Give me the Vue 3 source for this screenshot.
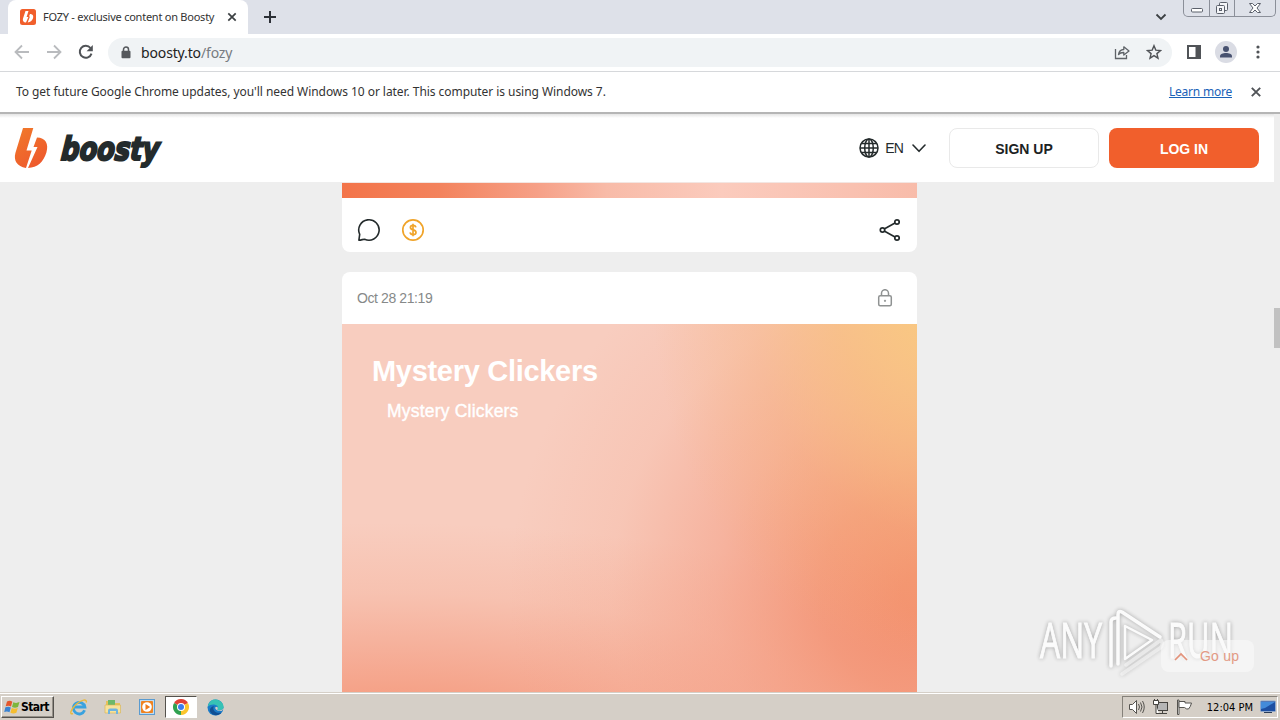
<template>
  <div class="screen">
    <div class="tabstrip">
      <div class="tab">
        <svg class="favicon" width="16" height="16" viewBox="0 0 16 16">
          <rect width="16" height="16" rx="2.5" fill="#f15f2c" />
          <path d="M5.500 2h3L6.600 8h1.800L6 13.600C3.300 13.300 2.400 11.600 3 9.500zM10 5c2.900.1 3.800 2 2.900 4.600-.8 2.200-2.600 3.700-5.200 3.900L10 7.500H9z" fill="#fff" />
        </svg>
        <span class="tab-title">FOZY - exclusive content on Boosty</span>
        <svg width="10" height="10" viewBox="0 0 10 10"><path d="M1.300 1.300l7.400 7.400M8.700 1.300L1.300 8.700" stroke="#3c4043" stroke-width="1.700" /></svg>
      </div>
      <svg class="new-tab" width="14" height="14" viewBox="0 0 14 14"><path d="M7 1v12M1 7h12" stroke="#2d3037" stroke-width="2" /></svg>
      <svg class="tab-search" width="12" height="8" viewBox="0 0 12 8"><path d="M1.500 1.500L6 6l4.500-4.500" fill="none" stroke="#3c4043" stroke-width="1.800" /></svg>
      <div class="window-buttons">
        <span class="win-btn min"><svg width="14" height="6"><rect x="1.500" y="1.500" width="11" height="3.500" rx="1" fill="#fff" stroke="#5b606b" /></svg></span>
        <span class="win-btn max"><svg width="14" height="14" fill="#f4f5f8" stroke="#5b606b"><rect x="4.500" y="1.500" width="8" height="8" rx="1" /><rect x="1.500" y="4.500" width="8" height="8" rx="1" /><rect x="4.500" y="7.500" width="2" height="2" /></svg></span>
        <span class="win-btn close"><svg width="14" height="12" viewBox="0 0 14 12"><path d="M1.500 1.500h3L7 4l2.500-2.500h3L9 6l3.500 4.500h-3L7 8l-2.500 2.500h-3L5 6z" fill="#fff" stroke="#5b606b" /></svg></span>
      </div>
    </div>

    <div class="toolbar">
      <svg class="nav" width="16" height="16" viewBox="0 0 16 16" fill="none" stroke="#b9bbbe" stroke-width="1.800"><path d="M15 8H2M8 1.500L1.500 8 8 14.500" /></svg>
      <svg class="nav" width="16" height="16" viewBox="0 0 16 16" fill="none" stroke="#b9bbbe" stroke-width="1.800"><path d="M1 8h13M8 1.500L14.500 8 8 14.500" /></svg>
      <svg class="nav" width="16" height="16" viewBox="0 0 16 16"><path d="M13.500 9.600A6 6 0 1 1 12.500 4" fill="none" stroke="#505357" stroke-width="2" /><path d="M14.800 1v6.200H8.600z" fill="#505357" /></svg>
      <div class="omnibox">
        <svg width="10" height="13" viewBox="0 0 10 13"><path d="M2.500 6V3.500a2.500 2.500 0 0 1 5 0V6" fill="none" stroke="#55585c" stroke-width="1.500" /><rect x=".5" y="4.800" width="9" height="7.500" rx="1" fill="#55585c" /></svg>
        <span class="url">boosty.to<span class="path">/fozy</span></span>
        <svg class="share-page" width="16" height="16" viewBox="0 0 16 16" fill="none" stroke="#5f6368" stroke-width="1.300"><path d="M1.500 5v9.500h11V11" /><path d="M4.500 10.500C5 7.200 7 5.600 9.800 5.500V2.800L15 7l-5.200 4V8.500c-2.300-.1-4 .5-5.300 2z" stroke-linejoin="round" /></svg>
        <svg width="16" height="16" viewBox="0 0 16 16"><path d="M8 1.700l1.800 4.400 4.700.4-3.600 3.100 1.100 4.600L8 11.700l-4 2.500 1.100-4.600-3.600-3.100 4.700-.4z" fill="none" stroke="#505357" stroke-width="1.400" /></svg>
      </div>
      <svg class="side-panel" width="14" height="14" viewBox="0 0 14 14"><rect x="1" y="1" width="12" height="12" fill="none" stroke="#505357" stroke-width="2" /><path d="M8.500 1H14v12H8.500z" fill="#505357" /></svg>
      <svg class="avatar" width="22" height="22" viewBox="0 0 22 22"><circle cx="11" cy="11" r="11" fill="#dadce4" /><circle cx="11" cy="8" r="3" fill="#47516f" /><path d="M5 16.500v-1.300c0-2 3-3.200 6-3.200s6 1.200 6 3.200v1.300z" fill="#47516f" /></svg>
      <svg width="4" height="14" viewBox="0 0 4 14" fill="#505357"><circle cx="2" cy="2" r="1.600" /><circle cx="2" cy="7" r="1.600" /><circle cx="2" cy="12" r="1.600" /></svg>
    </div>

    <div class="infobar">
      <span class="info-text">To get future Google Chrome updates, you'll need Windows 10 or later. This computer is using Windows 7.</span>
      <a class="learn">Learn more</a>
      <svg width="10" height="10" viewBox="0 0 10 10"><path d="M.8.8l8.400 8.400M9.200.8L.8 9.200" stroke="#505357" stroke-width="1.900" /></svg>
    </div>

    <div class="page">
      <header class="site-header">
        <svg class="logo" width="148" height="44" viewBox="0 0 148 44">
          <defs>
            <linearGradient id="flame" x1="0" y1="0" x2=".6" y2="1">
              <stop offset="0" stop-color="#f17a2a" />
              <stop offset="1" stop-color="#ee5a2d" />
            </linearGradient>
          </defs>
          <path d="M9 2H19.300L12.500 24.500h5.200L12 42C3 40.500-.6 34.500 1.400 27zM23 11.500c8.500.3 12 6.300 9.400 15C29.500 36 23.500 41.500 14 42L23.500 21h-4z" fill="url(#flame)" />
          <text class="wordmark" x="49.500" y="34" textLength="98" lengthAdjust="spacingAndGlyphs" transform="skewX(-5)">boosty</text>
        </svg>
        <div class="lang">
          <svg width="20" height="20" viewBox="0 0 20 20" fill="none" stroke="#242b2c" stroke-width="1.500"><circle cx="10" cy="10" r="9" /><ellipse cx="10" cy="10" rx="4.300" ry="9" /><path d="M10 1v18M1 10h18M2.500 5.500h15M2.500 14.500h15" /></svg>
          <span>EN</span>
          <svg width="14" height="9" viewBox="0 0 14 9"><path d="M1 1l6 6.300L13 1" fill="none" stroke="#242b2c" stroke-width="1.600" stroke-linecap="round" stroke-linejoin="round" /></svg>
        </div>
        <button class="btn signup">SIGN UP</button>
        <button class="btn login">LOG IN</button>
      </header>

      <main class="feed">
        <article class="post previous">
          <div class="cover-end"></div>
          <div class="actions">
            <svg width="24" height="24" viewBox="0 0 24 24"><path d="M1.900 22.200l.8-5.900A10.200 10.200 0 1 1 7.600 21.200c-1.800 0-3.200 1-5.700 1z" fill="none" stroke="#242b2c" stroke-width="1.600" stroke-linejoin="round" /></svg>
            <svg width="24" height="24" viewBox="0 0 24 24" fill="none" stroke="#f0a42a"><circle cx="12" cy="12" r="10.200" stroke-width="1.700" /><path d="M14.800 9.300c-.2-1.200-1.200-1.900-2.700-1.900-1.600 0-2.700.8-2.700 2.100 0 3.200 5.600 1.600 5.600 4.900 0 1.400-1.200 2.200-2.900 2.200s-2.800-.8-3-2.200M12 5.800v12.400" stroke-width="1.700" /></svg>
            <svg class="share" width="24" height="24" viewBox="0 0 24 24" fill="none" stroke="#242b2c" stroke-width="1.700"><path d="M6.200 10.900L17 5.100M6.200 13.100L17 18.900" /><circle cx="4.500" cy="12" r="2.200" /><circle cx="19" cy="4" r="2.200" /><circle cx="19" cy="20" r="2.200" /></svg>
          </div>
        </article>

        <article class="post">
          <div class="post-head">
            <time>Oct 28 21:19</time>
            <svg width="16" height="18" viewBox="0 0 16 18" fill="none" stroke="#8f9292" stroke-width="1.500"><path d="M4.500 7V4.200a3.500 3.500 0 0 1 7 0V7" /><rect x="1.700" y="6.800" width="12.600" height="10" rx="1.500" /><circle cx="8" cy="11.800" r=".4" /></svg>
          </div>
          <div class="cover">
            <h2>Mystery Clickers</h2>
            <p>Mystery Clickers</p>
          </div>
        </article>
      </main>

      <div class="scroll-thumb"></div>
      <svg class="watermark" width="204" height="72" viewBox="0 0 204 72">
        <text x="4" y="52" textLength="62" lengthAdjust="spacingAndGlyphs">ANY</text>
        <text x="132" y="52" textLength="65" lengthAdjust="spacingAndGlyphs">RUN</text>
        <g fill="none" stroke="#fff" stroke-width="3.500" stroke-linejoin="round" stroke-linecap="round">
          <path d="M75 60V16q0-4 5-4" />
          <path d="M82 58V9q0-5 4-3l38 25" />
          <path d="M89 20v33l27-19z" stroke-width="2.500" />
          <path d="M86 68l38-26q4-3 1-8L90 59" opacity=".55" />
        </g>
      </svg>
      <button class="go-up">
        <svg width="14" height="9" viewBox="0 0 14 9"><path d="M1 8l6-6 6 6" fill="none" stroke="#e3927a" stroke-width="1.700" /></svg>
        <span>Go up</span>
      </button>
    </div>

    <footer class="taskbar">
      <div class="start">
        <svg width="17" height="16" viewBox="0 0 17 16"><path d="M3 2.500c2-1 4-.8 5.300.2L7 7.500C5.300 6.400 3.500 6.500 1.700 7.300z" fill="#e4572c" /><path d="M9.300 3.200c2 1 4 .9 6.200-.1L14 8c-2 .9-4 1-6-.1z" fill="#7db63c" /><path d="M1.400 8.300c2-.8 3.800-.9 5.400.2l-1.300 4.800c-1.700-1-3.500-1-5.300-.2z" fill="#3a83d2" /><path d="M7.800 9c2 1 4 .9 6 0l-1.400 4.800c-2 .9-4 .9-6-.1z" fill="#f5bd2f" /></svg>
        <b>Start</b>
      </div>
      <div class="launch">
        <svg width="18" height="18" viewBox="0 0 18 18" fill="none"><path d="M14.600 12.300A5.800 5.800 0 1 1 14.900 9H5" stroke="#39a2df" stroke-width="2.800" /><path d="M3 15.500C-1 17 .7 11.500 6 6.500S17.500.5 16.200 4.500" stroke="#e9b93d" stroke-width="1.400" /></svg>
      </div>
      <div class="launch">
        <svg width="18" height="18" viewBox="0 0 18 18"><path d="M2 3h5l1.500 2H16v9H2z" fill="#e8c15a" /><path d="M4 2h7v5H4z" fill="#6cb86a" /><path d="M1 7h15.500v8H1z" fill="#f7e29a" stroke="#d9b352" stroke-width=".6" /><path d="M4 16v-3.500q0-2 2-2h6q2 0 2 2V16h-2v-3H6v3z" fill="#6fb4df" /></svg>
      </div>
      <div class="launch">
        <svg width="18" height="18" viewBox="0 0 18 18"><rect x="1.500" y="1.500" width="15" height="15" fill="#bfdcf2" stroke="#5a9bd0" /><rect x="3" y="3" width="12" height="12" rx="1" fill="#ef8321" /><circle cx="9" cy="9" r="4.800" fill="#fff" /><path d="M7.500 6v6l4.700-3z" fill="#ee7a1a" /></svg>
      </div>
      <div class="launch active">
        <svg width="16" height="16" viewBox="0 0 16 16"><path d="M8 8L1.070 4A8 8 0 0 1 14.930 4z" fill="#e04236" /><path d="M8 8L14.930 4A8 8 0 0 1 8 16z" fill="#fbc52c" /><path d="M8 8v8A8 8 0 0 1 1.070 4z" fill="#30a150" /><circle cx="8" cy="8" r="4" fill="#fff" /><circle cx="8" cy="8" r="3" fill="#3b7ded" /></svg>
      </div>
      <div class="launch">
        <svg width="17" height="17" viewBox="0 0 17 17"><circle cx="8.500" cy="8.500" r="8" fill="#1b7bc8" /><path d="M.8 7.500C2 2.500 5-.2 9 .5c5 .7 8 4.500 7.500 8-.4 2.700-4 3.400-6.200 2.200 1.500-2 .5-4.500-2.300-5C5 5.200 2.500 6 .8 7.500z" fill="#36c2b5" /><path d="M6.500 8c-1 4 2.500 6.800 8 5.500-3 4-9.500 3.200-11.300-.8C2 9.800 4.500 7 7.500 7.200z" fill="#114f93" /><path d="M8.300 8.200c-.5 2.300 2.700 4.500 6.700 3.500L17 9c-2 2.500-5.500 3-6.700 1.700.8-1 .6-2.300-.3-3z" fill="#d5cfc7" /></svg>
      </div>
      <div class="tray">
        <svg width="17" height="16" viewBox="0 0 17 16" fill="none" stroke="#55534f"><path d="M1.500 5.500h3l4-4v13l-4-4h-3z" fill="#fff" /><path d="M10.500 5q2 3 0 6M12.500 3.500q3 4.500 0 9M14.500 2q3.500 6 0 12" /></svg>
        <svg width="17" height="16" viewBox="0 0 17 16" stroke="#45433f"><rect x="5.500" y="3.500" width="10" height="8" fill="#b5b5b5" /><path d="M7 14.500h8M10.500 12v2" fill="none" /><path d="M1.500 1.500h5v4h-5zM4 6v8.500h3M2.500 0v2M5.500 0v2" fill="#fff" /></svg>
        <svg width="17" height="16" viewBox="0 0 17 16" stroke="#55534f"><path d="M1.500 1v14.500h1.500V1z" fill="#fff" /><path d="M3 2.500h6v1.500h6.500q-1 4-3 6-2 .5-4-1.500H3z" fill="#fff" /></svg>
        <span class="clock">12:04 PM</span>
        <svg width="16" height="14" viewBox="0 0 16 14"><rect x=".5" y="1" width="15" height="10.500" rx="1" fill="#1d4fa2" stroke="#8fa8cc" /><path d="M1 2h14L5 8 1 9z" fill="#438bda" /><path d="M4 12.500h8" stroke="#2a3c58" /></svg>
      </div>
    </footer>
  </div>
</template>

<script setup>
</script>

<style>
body {
  margin: 0;
  overflow: hidden;
}
</style>

<style scoped>
.screen {
  width: 1280px;
  height: 720px;
  display: flex;
  flex-direction: column;
  overflow: hidden;
  font-family: "Noto Sans", sans-serif;
  color: #333;
}

.screen * {
  box-sizing: border-box;
}

.screen svg {
  display: block;
  flex-shrink: 0;
}

.tabstrip {
  height: 34px;
  flex-shrink: 0;
  background: #dee1e9;
  display: flex;
  align-items: center;
}

.tab {
  width: 240px;
  height: 34px;
  margin-left: 8px;
  padding: 0 11px 0 12px;
  display: flex;
  align-items: center;
  background: #fff;
  border-radius: 8px 8px 0 0;
}

.tab-title {
  flex: 1;
  margin-left: 7px;
  padding-bottom: 2px;
  font-size: 11px;
  letter-spacing: -0.24px;
  white-space: nowrap;
}

.new-tab {
  margin-left: 15px;
}

.tab-search {
  margin-left: auto;
}

.window-buttons {
  margin: 0 4px 0 16px;
  width: 93px;
  height: 17px;
  align-self: flex-start;
  display: flex;
  border: 1px solid #8b8f99;
  border-top: none;
  border-radius: 0 0 5px 5px;
}

.win-btn {
  display: flex;
  align-items: center;
  justify-content: center;
  width: 25px;
}

.win-btn + .win-btn {
  border-left: 1px solid #8b8f99;
}

.win-btn.min {
  padding-top: 4px;
}

.win-btn.close {
  flex: 1;
}

.toolbar {
  height: 38px;
  flex-shrink: 0;
  padding: 1px 20px 2px 14px;
  display: flex;
  align-items: center;
  background: #fff;
  border-bottom: 1px solid #d6d8db;
}

.nav {
  margin-right: 16px;
}

.omnibox {
  width: 1064px;
  height: 29px;
  margin-left: -2px;
  padding: 0 10px 0 13px;
  border-radius: 15px;
  background: #f0f3f5;
  display: flex;
  align-items: center;
}

.url {
  flex: 1;
  margin-left: 10px;
  font-size: 14px;
  letter-spacing: -0.14px;
  color: #222;
}

.path {
  color: #777b80;
}

.share-page {
  margin-right: 16px;
}

.side-panel {
  margin-left: 15px;
}

.avatar {
  margin: 0 auto 0 14px;
}

.infobar {
  height: 42px;
  flex-shrink: 0;
  padding: 0 19px 1px 16px;
  display: flex;
  align-items: center;
  background: #fff;
  border-bottom: 2px solid #b5b5b5;
  font-size: 12px;
}

.info-text {
  letter-spacing: -0.055px;
  white-space: nowrap;
}

.learn {
  margin: 0 19px 0 auto;
  color: #1a62b8;
  letter-spacing: -0.22px;
  text-decoration: underline;
}

.page {
  position: relative;
  flex: 1;
  min-height: 0;
  overflow: hidden;
  background: #eee;
  font-family: "Liberation Sans", Arial, sans-serif;
}

.site-header {
  width: 1274px;
  height: 68px;
  padding: 0 15px 0 14px;
  display: flex;
  align-items: center;
  background: linear-gradient(#e4e4e4, #fff 4px);
}

.logo {
  margin-right: auto;
  overflow: visible;
}

.wordmark {
  font-family: "DejaVu Sans", sans-serif;
  font-size: 32px;
  font-weight: bold;
  font-style: italic;
  fill: #242b2c;
  stroke: #242b2c;
  stroke-width: 2.200px;
}

.lang {
  display: flex;
  align-items: center;
  margin-right: 23px;
  font-size: 14px;
  color: #242b2c;
}

.lang span {
  margin: 0 9px 0 6px;
  letter-spacing: -0.8px;
}

.btn {
  width: 150px;
  height: 40px;
  padding: 2px 0 0;
  border-radius: 8px;
  font-family: inherit;
  font-size: 14px;
  font-weight: bold;
}

.signup {
  background: #fff;
  border: 1px solid #e9e9e9;
  color: #1c2223;
}

.login {
  margin-left: 10px;
  background: #f15f2c;
  border: none;
  color: #fff;
}

.feed {
  width: 575px;
  margin-left: 342px;
}

.post {
  background: #fff;
  border-radius: 8px 8px 0 0;
  overflow: hidden;
}

.post.previous {
  margin-bottom: 20px;
  border-radius: 0 0 8px 8px;
}

.cover-end {
  height: 16px;
  border-top: 1px solid #f3e6e2;
  background: linear-gradient(90deg, #f37449, #f3835d 17%, #f6a087 34%, #f8bba8 46%, #fbcbbd 66%, #f8bcaa);
}

.actions {
  height: 54px;
  padding: 10px 15px 0;
  display: flex;
  align-items: center;
  gap: 20px;
}

.share {
  margin-left: auto;
}

.post-head {
  height: 52px;
  padding: 0 24px 0 15px;
  display: flex;
  align-items: center;
  justify-content: space-between;
  font-size: 14px;
  letter-spacing: -0.4px;
  color: #868989;
}

.cover {
  height: 368px;
  padding: 30px;
  color: #fff;
  background:
    radial-gradient(ellipse 50% 100% at 104% -8%, #f9c882 8%, rgba(248, 192, 126, 0.75) 36%, rgba(247, 180, 120, 0.35) 65%, rgba(247, 180, 120, 0) 100%),
    radial-gradient(ellipse 72% 110% at 101% 73%, #f38f6f 5%, rgba(243, 144, 112, 0.82) 25%, rgba(244, 150, 122, 0.48) 50%, rgba(245, 160, 132, 0.16) 75%, rgba(246, 165, 140, 0) 100%),
    radial-gradient(ellipse 120% 64% at 8% 118%, #f49475 10%, rgba(244, 152, 124, 0.62) 42%, rgba(245, 160, 132, 0.25) 70%, rgba(245, 165, 140, 0) 100%),
    #f8cdbf;
}

.cover h2 {
  margin: 0;
  font-size: 29px;
  line-height: 34px;
  letter-spacing: -0.3px;
}

.cover p {
  margin: 13px 0 0 15px;
  font-size: 17.500px;
  line-height: 20px;
  letter-spacing: 0.2px;
  -webkit-text-stroke: 0.4px #fff;
}

.scroll-thumb {
  position: absolute;
  right: 0;
  top: 194px;
  width: 6px;
  height: 40px;
  background: #c1c1c1;
}

.go-up {
  position: absolute;
  left: 1161px;
  top: 526px;
  width: 93px;
  height: 32px;
  padding: 0 13px;
  display: flex;
  align-items: center;
  gap: 12px;
  border: none;
  border-radius: 8px;
  background: rgba(250, 250, 250, 0.6);
  color: #e39a84;
  font-family: inherit;
  font-size: 14px;
  letter-spacing: 0.2px;
  white-space: nowrap;
}

.watermark {
  position: absolute;
  left: 1036px;
  top: 492px;
  overflow: visible;
  opacity: 0.8;
  filter: drop-shadow(0 0 2px rgba(0, 0, 0, 0.4));
}

.watermark text {
  font-family: "Open Sans", sans-serif;
  font-size: 50px;
  fill: #fff;
  stroke: #fff;
  stroke-width: 1px;
}

.taskbar {
  height: 28px;
  flex-shrink: 0;
  display: flex;
  align-items: center;
  padding: 1px 2px 0 1px;
  background: #d5cfc7;
  border-top: 1px solid #d5cfc7;
  box-shadow: inset 0 1px #fff;
  font-family: "DejaVu Sans Condensed", "DejaVu Sans", sans-serif;
  color: #000;
}

.start {
  width: 53px;
  height: 22px;
  margin-right: 9px;
  padding-left: 2px;
  display: flex;
  align-items: center;
  border: 1px solid;
  border-color: #fff #55524d #55524d #fff;
  box-shadow: inset -1px -1px #969189;
  font-size: 12px;
}

.start b {
  letter-spacing: -0.6px;
}

.launch {
  width: 32px;
  height: 22px;
  margin-right: 2px;
  display: flex;
  align-items: center;
  justify-content: center;
}

.launch.active {
  background: #fff;
  border: 1px solid;
  border-color: #55524d #fff #fff #55524d;
}

.tray {
  width: 156px;
  height: 22px;
  margin-left: auto;
  padding: 0 1px 0 5px;
  display: flex;
  align-items: center;
  gap: 7px;
  border: 1px solid;
  border-color: #85817a #fff #fff #85817a;
  font-size: 11px;
}

.clock {
  margin-left: auto;
  white-space: nowrap;
}
</style>
